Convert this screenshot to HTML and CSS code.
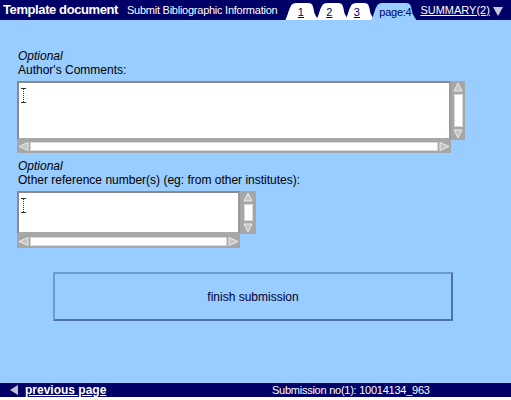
FILE: index.html
```html
<!DOCTYPE html>
<html>
<head>
<meta charset="utf-8">
<link rel="stylesheet" href="styles.css">
</head>
<body>
<div class="page">
  <div class="header">
    <span class="title">Template document</span>
    <span class="subtitle">Submit Bibliographic Information</span>
    <div class="tabs">
      <span class="tab tab-1"><a>1</a></span>
      <span class="tab tab-2"><a>2</a></span>
      <span class="tab tab-3"><a>3</a></span>
      <span class="tab tab-active">page:4</span>
    </div>
    <span class="summary"><a>SUMMARY(2)</a>
      <svg class="down" width="10" height="9" viewBox="0 0 10 9"><polygon points="0,0 10,0 5,9" fill="#c8c8d8"/></svg>
    </span>
  </div>

  <div class="content">
    <div class="label"><em>Optional</em></div>
    <div class="label">Author's Comments:</div>
    <div class="field field-wide">
      <div class="box">
        <svg class="caret" width="5" height="15" viewBox="0 0 5 15"><path d="M0 0.5H5M0 14.5H5" stroke="#333" stroke-width="1"/><path d="M2.5 1V14" stroke="#333" stroke-width="1" stroke-dasharray="1 1"/></svg>
      </div>
      <div class="vscroll">
        <svg class="arr" width="10" height="10" viewBox="0 0 10 10"><polygon points="5,1 9,9 1,9" fill="#c4c4c4" stroke="#ececec"/></svg>
        <div class="vthumb"></div>
        <svg class="arr" width="10" height="10" viewBox="0 0 10 10"><polygon points="1,1 9,1 5,9" fill="#c4c4c4" stroke="#ececec"/></svg>
      </div>
      <div class="hscroll">
        <svg class="arr" width="11" height="9" viewBox="0 0 11 9"><polygon points="1,4.5 10,0.5 10,8.5" fill="#c4c4c4" stroke="#ececec"/></svg>
        <div class="hthumb"></div>
        <svg class="arr" width="11" height="9" viewBox="0 0 11 9"><polygon points="1,0.5 10,4.5 1,8.5" fill="#c4c4c4" stroke="#ececec"/></svg>
      </div>
    </div>

    <div class="label label-gap"><em>Optional</em></div>
    <div class="label">Other reference number(s) (eg: from other institutes):</div>
    <div class="field field-narrow">
      <div class="box">
        <svg class="caret" width="5" height="15" viewBox="0 0 5 15"><path d="M0 0.5H5M0 14.5H5" stroke="#333" stroke-width="1"/><path d="M2.5 1V14" stroke="#333" stroke-width="1" stroke-dasharray="1 1"/></svg>
      </div>
      <div class="vscroll">
        <svg class="arr" width="10" height="10" viewBox="0 0 10 10"><polygon points="5,1 9,9 1,9" fill="#c4c4c4" stroke="#ececec"/></svg>
        <div class="vthumb"></div>
        <svg class="arr" width="10" height="10" viewBox="0 0 10 10"><polygon points="1,1 9,1 5,9" fill="#c4c4c4" stroke="#ececec"/></svg>
      </div>
      <div class="hscroll">
        <svg class="arr" width="11" height="9" viewBox="0 0 11 9"><polygon points="1,4.5 10,0.5 10,8.5" fill="#c4c4c4" stroke="#ececec"/></svg>
        <div class="hthumb"></div>
        <svg class="arr" width="11" height="9" viewBox="0 0 11 9"><polygon points="1,0.5 10,4.5 1,8.5" fill="#c4c4c4" stroke="#ececec"/></svg>
      </div>
    </div>

    <div class="finish">finish submission</div>
  </div>

  <div class="footer">
    <span class="prev">
      <svg width="8" height="10" viewBox="0 0 8 10"><polygon points="0,5 8,0 8,10" fill="#c0c0d4"/></svg>
      <a>previous page</a>
    </span>
    <span class="subno">Submission no(1): 10014134_963</span>
  </div>
  <div class="strip"></div>
</div>
</body>
</html>
```

FILE: styles.css
```css
html, body {
  margin: 0;
  padding: 0;
}
body {
  width: 511px;
  height: 400px;
  overflow: hidden;
  background: #99ccff;
  font-family: "Liberation Sans", Arial, Helvetica, sans-serif;
  color: #000;
}
.page {
  display: flex;
  flex-direction: column;
  height: 400px;
}
.header {
  height: 20px;
  flex: none;
  background: #000066;
  color: #fff;
  display: flex;
  align-items: flex-end;
}
.title {
  font-weight: bold;
  font-size: 13px;
  letter-spacing: -0.4px;
  margin-left: 3px;
  line-height: 18px;
  padding-bottom: 1px;
}
.subtitle {
  font-size: 11px;
  letter-spacing: -0.25px;
  margin-left: 9px;
  line-height: 17px;
  padding-bottom: 1px;
}
.tabs {
  display: flex;
  margin-left: 8px;
  height: 17px;
}
.tab {
  height: 17px;
  background: #fff;
  font-size: 11px;
  line-height: 18px;
  text-align: center;
  color: #000066;
  box-sizing: border-box;
  clip-path: polygon(0 17px, 2px 12px, 4px 6px, 6px 2px, 8px 0.5px, 11px 0, calc(100% - 10px) 0, calc(100% - 7.5px) 0.5px, calc(100% - 6px) 2px, calc(100% - 5px) 5px, calc(100% - 4px) 10px, calc(100% - 2px) 14px, 100% 17px);
}
.tab a {
  text-decoration: underline;
}
.tab-1 { width: 33px; padding-right: 2px; }
.tab-2 { width: 32px; margin-left: -2px; padding-right: 6px; }
.tab-3 { width: 29px; margin-left: -3px; padding-right: 6px; }
.tab-active {
  width: 45px;
  margin-left: -3px;
  background: #99ccff;
  letter-spacing: -0.25px;
  padding-left: 3px;
}
.summary {
  margin-left: 4px;
  font-size: 11px;
  line-height: 17px;
  padding-bottom: 1px;
  display: flex;
  align-items: center;
  gap: 3px;
}
.summary a {
  text-decoration: underline;
}
.down {
  margin-top: 1px;
}
.content {
  flex: 1;
  padding: 29px 0 0 17px;
  display: flex;
  flex-direction: column;
  align-items: flex-start;
}
.label {
  font-size: 12px;
  line-height: 14px;
  padding-left: 1px;
}
.label em {
  font-style: italic;
}
.label-gap {
  margin-top: 6px;
}
.field {
  display: grid;
  margin-top: 4px;
}
.field-wide {
  grid-template-columns: 434px 14px;
  grid-template-rows: 59px 13px;
}
.field-narrow {
  grid-template-columns: 223px 16px;
  grid-template-rows: 43px 14px;
}
.box {
  background: #fff;
  border: 2px solid #8a8a8a;
  border-right-color: #9a9a9a;
  border-bottom-color: #a8a8a8;
  box-sizing: border-box;
  padding: 5px 0 0 2px;
}
.caret {
  display: block;
}
.vscroll {
  background: #a6a6a6;
  display: flex;
  flex-direction: column;
  align-items: center;
  padding: 1px 0;
  box-sizing: border-box;
}
.arr {
  display: block;
  flex: none;
}
.vthumb {
  flex: 1;
  width: 7px;
  margin: 2px 0;
  background: #fff;
  border: 1px solid #d8d8d8;
}
.hscroll {
  background: #a6a6a6;
  display: flex;
  align-items: center;
  padding: 0 1px;
  box-sizing: border-box;
  gap: 1px;
}
.hthumb {
  flex: 1;
  height: 7px;
  background: #fff;
  border: 1px solid #d8d8d8;
}
.finish {
  margin: 24px 0 0 36px;
  width: 400px;
  height: 49px;
  box-sizing: border-box;
  border: 2px solid;
  border-color: #6f98cc #4d74a4 #4d74a4 #6f98cc;
  display: flex;
  align-items: center;
  justify-content: center;
  font-size: 12px;
  color: #000033;
}
.footer {
  height: 14px;
  flex: none;
  background: #000066;
  color: #fff;
  display: grid;
  grid-template-columns: 262px auto;
  padding-left: 10px;
  align-items: center;
}
.prev {
  display: flex;
  align-items: center;
  gap: 7px;
  font-weight: bold;
  font-size: 12px;
  line-height: 14px;
}
.prev svg {
  display: block;
}
.prev a {
  text-decoration: underline;
}
.subno {
  font-size: 11px;
  letter-spacing: -0.25px;
  line-height: 14px;
}
.strip {
  height: 3px;
  flex: none;
  background: #fff;
}
```
